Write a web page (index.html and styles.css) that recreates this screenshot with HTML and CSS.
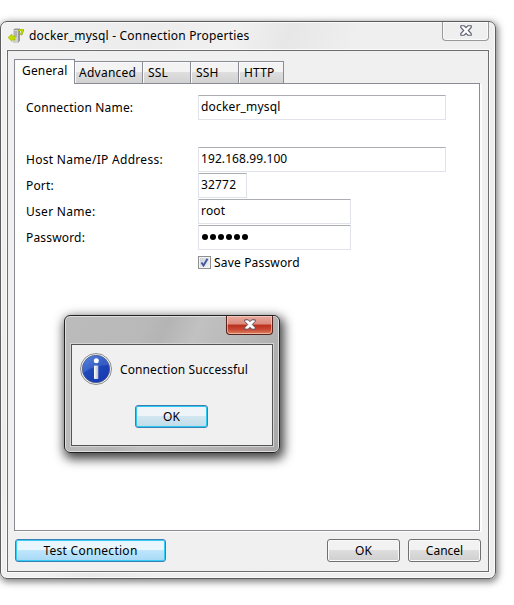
FILE: index.html
```
<!DOCTYPE html>
<html lang="en">
<head>
<meta charset="utf-8">
<title>docker_mysql - Connection Properties</title>
<link rel="stylesheet" href="styles.css">
</head>
<body>
<main class="window">
  <header class="titlebar">
    <svg class="app-icon" width="16" height="16" viewBox="0 0 16 16">
      <path d="M5 2l2-1.500h5v12L10 15H5z" fill="#999"/>
      <path d="M5 2h5v13H5z" fill="#d0d0d0"/>
      <path d="M6 4h3M6 6h3M6 8h3" stroke="#888" stroke-width=".8"/>
      <path d="M10.500 3.200L12 2h3l-2 5" fill="none" stroke="#829e00" stroke-width="2.200"/>
      <path d="M10.500 3L12 2h3l-2 4.500" fill="none" stroke="#c5dc00" stroke-width="1.500"/>
      <path d="M0 9.500L4 6v2h3v4H4v1.500z" fill="#c5dc00" stroke="#9db500" stroke-width=".6"/>
    </svg>
    <h1 class="title">docker_mysql - Connection Properties</h1>
    <button class="close" aria-label="Close">
      <svg width="12" height="11" viewBox="0 0 12 11"><path d="M.8.8h3.400L6 2.700 7.800.8h3.400v1.700L8.300 5.500l2.900 3v1.700H7.800L6 8.300l-1.800 1.900H.8V8.500l2.900-3-2.900-3z" fill="#fff" stroke="#5c5f70" stroke-width="1.100"/></svg>
    </button>
  </header>
  <section class="client">
    <nav class="tabs">
      <span class="tab active">General</span>
      <span class="tab advanced">Advanced</span>
      <span class="tab">SSL</span>
      <span class="tab">SSH</span>
      <span class="tab http">HTTP</span>
    </nav>
    <div class="panel">
      <div class="row first"><label class="name">Connection Name:</label><span class="field">docker_mysql</span></div>
      <div class="row"><label class="host">Host Name/IP Address:</label><span class="field ip">192.168.99.100</span></div>
      <div class="row"><label>Port:</label><span class="field port">32772</span></div>
      <div class="row"><label class="user">User Name:</label><span class="field medium">root</span></div>
      <div class="row"><label>Password:</label><span class="field medium dots"><i></i><i></i><i></i><i></i><i></i><i></i></span></div>
      <div class="check"><span class="box"><svg width="9" height="9" viewBox="0 0 9 9"><path d="M1.500 4.500l2 3L7.500.8" fill="none" stroke="#40589b" stroke-width="1.900"/></svg></span><span>Save Password</span></div>
    </div>
    <footer class="footer">
      <button class="btn test">Test Connection</button>
      <button class="btn ok">OK</button>
      <button class="btn">Cancel</button>
    </footer>
  </section>
</main>
<section class="dialog">
  <header class="dialog-bar">
    <button class="close red" aria-label="Close">
      <svg width="12" height="11" viewBox="0 0 12 11"><path d="M.8.8h3.400L6 2.700 7.800.8h3.400v1.700L8.300 5.500l2.900 3v1.700H7.800L6 8.300l-1.800 1.900H.8V8.500l2.900-3-2.900-3z" fill="#fff" stroke="#5c4b58" stroke-width="1"/></svg>
    </button>
  </header>
  <div class="dialog-body">
    <div class="message">
      <svg width="32" height="32" viewBox="0 0 32 32">
        <defs>
          <linearGradient id="blue" x1="0" y1="0" x2=".7" y2="1"><stop offset="0" stop-color="#5580dc"/><stop offset=".5" stop-color="#1f49b8"/><stop offset="1" stop-color="#1737b4"/></linearGradient>
          <linearGradient id="stem" x1="0" x2="1"><stop offset="0" stop-color="#fff"/><stop offset="1" stop-color="#b9bdc9"/></linearGradient>
        </defs>
        <circle cx="16" cy="16" r="15.500" fill="#f4f4f4" stroke="#8d8d8d"/>
        <circle cx="16" cy="16" r="13.700" fill="url(#blue)" stroke="#4c5a80" stroke-width=".8"/>
        <path d="M3 17C3 8 8 3 16 3s13 5 13 9C18 12 10 15 3 20z" fill="#6d96e8" opacity=".3"/>
        <circle cx="16.300" cy="7.800" r="2.500" fill="#fff"/>
        <rect x="14" y="12.500" width="4.300" height="13.500" rx=".8" fill="url(#stem)"/>
      </svg>
      <span>Connection Successful</span>
    </div>
    <button class="btn default">OK</button>
  </div>
</section>
</body>
</html>
```
FILE: styles.css
```
* { box-sizing: border-box; }
body {
  margin: 0;
  padding-top: 21px;
  height: 605px;
  overflow: hidden;
  background: #fff;
  color: #000;
  font: 12px/16px "Noto Sans", "Open Sans", sans-serif;
  letter-spacing: .17px;
}
.window {
  width: 496px;
  height: 558px;
  border: 1px solid #5d5d5d;
  border-radius: 7px;
  background: linear-gradient(110deg, #f2f2f2 0, #ececec 22%, #f1f1f1 34%, #e7e7e7 42%, #efefef 52%, #eee 100%);
  box-shadow: inset 0 0 0 1px #fafafa, 1px 2px 7px 1px rgba(0, 0, 0, .5);
  padding: 0 6px 6px;
}
.titlebar { display: flex; height: 28px; }
.app-icon { margin: 6px 5px 0 1px; }
.title { margin: 6px auto 0 0; font-size: 12px; line-height: 16px; font-weight: 400; letter-spacing: .2px; }
.close {
  display: flex;
  align-items: center;
  justify-content: center;
  width: 47px;
  height: 19px;
  padding: 0 0 1px 1px;
  border: 1px solid #999;
  border-top: 0;
  border-radius: 0 0 4px 4px;
  background: #efefef;
  box-shadow: inset 0 0 0 1px #fafafa;
}
.client {
  height: 522px;
  border: 1px solid #6d6d6d;
  box-shadow: 0 0 0 1px #fafafa;
  background: #f0f0f0;
  padding: 8px 8px 0 6px;
}
.tabs { display: flex; align-items: flex-end; height: 24px; }
.tab {
  width: 48px;
  height: 22px;
  padding: 3px 0 0 5px;
  border: 1px solid #898c95;
  border-width: 1px 0 0 1px;
  box-shadow: inset 1px 1px #fbfbfb;
  background: linear-gradient(#f3f3f3 0 45%, #dedede 50%, #d1d1d1);
}
.tab.active { width: 61px; height: 25px; margin-bottom: -1px; padding: 3px 0 0 7px; border-right-width: 1px; background: #fff; z-index: 1; }
.tab.advanced { width: 67px; padding-left: 4px; border-left: 0; letter-spacing: .25px; }
.tab.http { width: 46px; border-right-width: 1px; }
.panel {
  width: 466px;
  height: 448px;
  border: 1px solid #898c95;
  box-shadow: 2px 1px #fcfcfc;
  background: #fff;
  padding: 11px 0 0 11px;
}
.row { display: flex; align-items: center; height: 25px; margin-bottom: 1px; }
.row.first { margin-bottom: 27px; }
.row label { width: 172px; }
.row .host, .row .user { letter-spacing: .3px; }
.field {
  width: 248px;
  height: 25px;
  padding: 3px 0 0 2px;
  border: 1px solid #e0e4ea;
  border-top-color: #abadb3;
  border-radius: 1px;
}
.field.ip { letter-spacing: .08px; }
.port { width: 49px; }
.medium { width: 153px; }
.dots { display: flex; gap: 2px; padding: 8px 0 0 3px; }
.dots i { width: 6px; height: 6px; border-radius: 50%; background: #000; }
.check { display: flex; align-items: center; gap: 3px; padding: 4px 0 0 172px; }
.box {
  display: grid;
  place-items: center;
  width: 13px;
  height: 13px;
  margin-top: -1px;
  border: 1px solid #8e8f8f;
  box-shadow: inset 0 0 0 1px #f4f4f4;
  background: linear-gradient(135deg, #c9ced6, #f4f5f6);
}
.footer { display: flex; padding: 8px 0 0 1px; }
.btn {
  flex: none;
  width: 73px;
  height: 23px;
  padding: 0;
  border: 1px solid #707070;
  border-radius: 3px;
  background: linear-gradient(#f2f2f2 0 45%, #ddd 50%, #cfcfcf);
  box-shadow: inset 0 0 0 1px #fafafa;
  color: #000;
  font: inherit;
}
.btn.test {
  width: 151px;
  border-color: #3c7fb1;
  background: linear-gradient(#eaf6fd 0 48%, #bee6fd 50%, #a7d9f5);
  box-shadow: inset 0 0 0 1px #34ccfb;
  letter-spacing: .27px;
}
.btn.ok { margin: 0 8px 0 161px; }
.dialog {
  position: absolute;
  left: 64px;
  top: 315px;
  width: 216px;
  height: 138px;
  padding: 0 6px 6px;
  border: 1px solid #222;
  border-radius: 6px;
  background: linear-gradient(115deg, #bbb 0, #b9b9b9 30%, #b4b4b4 38%, #c1c1c1 50%, #b9b9b9 65%, #a9a6a8 100%);
  box-shadow: inset 0 0 0 1px #dedede, 2px 4px 11px 2px rgba(0, 0, 0, .75);
}
.dialog-bar { display: flex; justify-content: flex-end; height: 28px; }
.close.red {
  border-color: #55221d;
  background: linear-gradient(#e9aaa0 0, #dc8a7c 45%, #b92f1e 50%, #c84834 75%, #de8360);
  box-shadow: inset 0 0 0 1px rgba(255, 224, 210, .55);
}
.dialog-body {
  height: 102px;
  border: 1px solid #555;
  box-shadow: 0 0 0 1px #d3d3d3;
  background: #f0f0f0;
  padding: 8px;
}
.message { display: flex; align-items: center; gap: 8px; margin-bottom: 20px; letter-spacing: .1px; }
.message span { padding-top: 2px; }
.btn.default {
  display: block;
  margin-left: 55px;
  border-color: #3c7fb1;
  background: linear-gradient(#eef4f7 0 45%, #d2e6ef 50%, #bfdce9);
  box-shadow: inset 0 0 0 1px #2bc8f4;
}
```
